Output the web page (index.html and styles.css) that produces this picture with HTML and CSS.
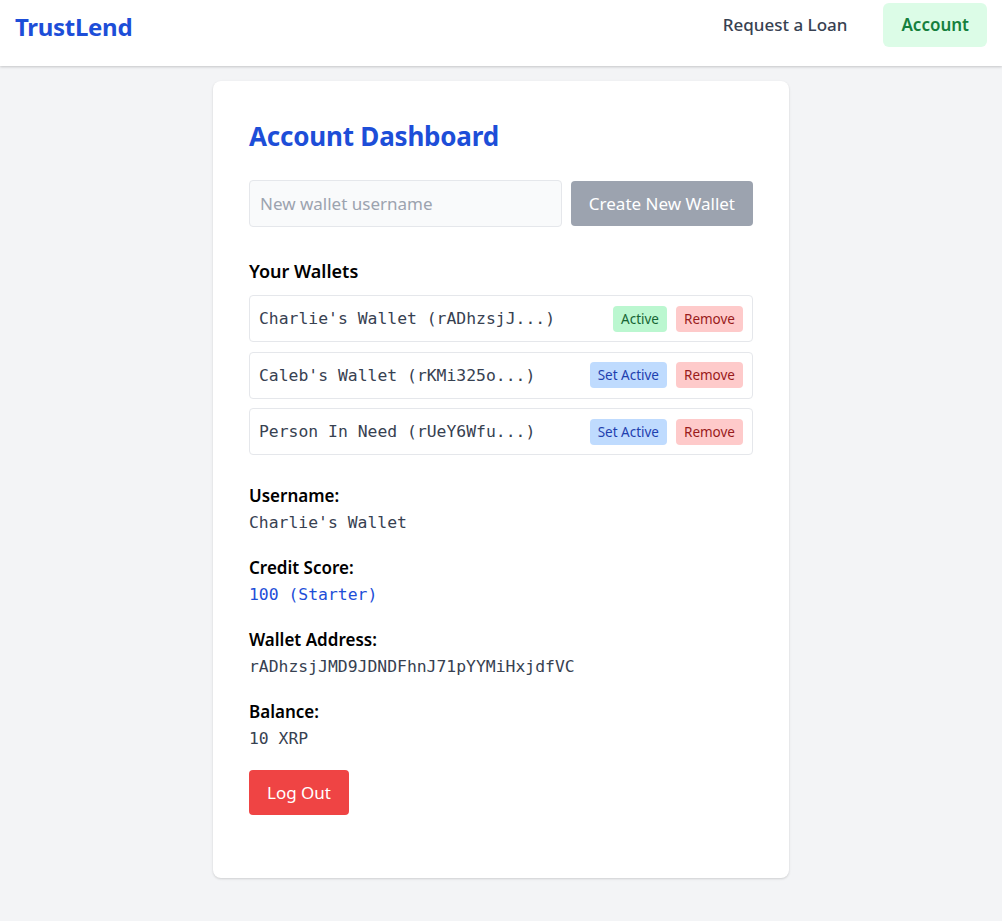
FILE: index.html
```html
<!DOCTYPE html>
<html lang="en">
<head>
<meta charset="utf-8">
<title>TrustLend - Account</title>
<link rel="stylesheet" href="styles.css">
</head>
<body>
<header class="topbar">
  <div class="logo">TrustLend</div>
  <nav class="nav">
    <a class="nav-link">Request a Loan</a>
    <a class="nav-link nav-active">Account</a>
  </nav>
</header>
<main class="page">
  <section class="card">
    <h1 class="title">Account Dashboard</h1>
    <div class="create-row">
      <input class="wallet-input" type="text" placeholder="New wallet username">
      <button class="btn-create">Create New Wallet</button>
    </div>
    <h2 class="subtitle">Your Wallets</h2>
    <ul class="wallet-list">
      <li class="wallet-row">
        <span class="wallet-name">Charlie's Wallet (rADhzsjJ...)</span>
        <div class="wallet-actions">
          <span class="badge badge-active">Active</span>
          <button class="badge badge-remove">Remove</button>
        </div>
      </li>
      <li class="wallet-row">
        <span class="wallet-name">Caleb's Wallet (rKMi325o...)</span>
        <div class="wallet-actions">
          <button class="badge badge-set">Set Active</button>
          <button class="badge badge-remove">Remove</button>
        </div>
      </li>
      <li class="wallet-row">
        <span class="wallet-name">Person In Need (rUeY6Wfu...)</span>
        <div class="wallet-actions">
          <button class="badge badge-set">Set Active</button>
          <button class="badge badge-remove">Remove</button>
        </div>
      </li>
    </ul>
    <dl class="info">
      <div class="info-item">
        <dt>Username:</dt>
        <dd>Charlie's Wallet</dd>
      </div>
      <div class="info-item">
        <dt>Credit Score:</dt>
        <dd class="score">100 (Starter)</dd>
      </div>
      <div class="info-item">
        <dt>Wallet Address:</dt>
        <dd>rADhzsjJMD9JDNDFhnJ71pYYMiHxjdfVC</dd>
      </div>
      <div class="info-item">
        <dt>Balance:</dt>
        <dd>10 XRP</dd>
      </div>
    </dl>
    <button class="btn-logout">Log Out</button>
  </section>
</main>
</body>
</html>
```
FILE: styles.css
```css
* { box-sizing: border-box; }
html, body { margin: 0; padding: 0; }
body {
  background: #f3f4f6;
  font-family: "Noto Sans", "Open Sans", sans-serif;
  color: #000;
  min-height: 921px;
}
.topbar {
  height: 66px;
  background: #fff;
  box-shadow: 0 1px 3px rgba(0,0,0,0.12), 0 1px 2px rgba(0,0,0,0.08);
  display: flex;
  align-items: flex-start;
  justify-content: space-between;
  padding: 0 15px;
}
.logo {
  font-size: 24px;
  font-weight: 700;
  color: #1d4ed8;
  margin-top: 10px;
  letter-spacing: -0.3px;
}
.nav {
  display: flex;
  align-items: center;
  gap: 18px;
  margin-top: 3px;
}
.nav-link {
  font-size: 17px;
  font-weight: 500;
  color: #374151;
  padding: 10px 18px;
  border-radius: 6px;
  line-height: 24px;
}
.nav-active {
  background: #dcfce7;
  color: #15803d;
  font-weight: 600;
}
.page {
  display: flex;
  justify-content: center;
  padding-top: 15px;
  padding-bottom: 43px;
}
.card {
  width: 576px;
  background: #fff;
  border-radius: 8px;
  box-shadow: 0 1px 3px rgba(0,0,0,0.10), 0 1px 2px rgba(0,0,0,0.06);
  padding: 36px 36px 63px;
}
.title {
  margin: 0 0 25px;
  font-size: 26px;
  font-weight: 700;
  color: #1d4ed8;
  line-height: 38px;
  letter-spacing: -0.2px;
}
.create-row {
  display: flex;
  align-items: center;
  gap: 9px;
}
.wallet-input {
  flex: 1;
  height: 47px;
  background: #f9fafb;
  border: 1px solid #e5e7eb;
  border-radius: 4px;
  padding: 0 10px;
  font-family: inherit;
  font-size: 17px;
  color: #111827;
}
.wallet-input::placeholder { color: #9ca3af; }
.btn-create {
  height: 45px;
  padding: 0 18px;
  background: #9ca3af;
  color: #fff;
  border: none;
  border-radius: 4px;
  font-family: inherit;
  font-size: 17px;
}
.subtitle {
  margin: 32px 0 12px;
  font-size: 18px;
  font-weight: 600;
  line-height: 24px;
}
.wallet-list {
  list-style: none;
  margin: 0;
  padding: 0;
  display: flex;
  flex-direction: column;
  gap: 9.5px;
}
.wallet-row {
  height: 47px;
  border: 1px solid #e5e7eb;
  border-radius: 4px;
  display: flex;
  align-items: center;
  justify-content: space-between;
  padding: 0 9px;
}
.wallet-name {
  font-family: "DejaVu Sans Mono", "Liberation Mono", monospace;
  font-size: 16.4px;
  color: #374151;
}
.wallet-actions {
  display: flex;
  gap: 9px;
}
.badge {
  display: inline-flex;
  align-items: center;
  height: 26px;
  padding: 0 8px;
  border: none;
  border-radius: 4px;
  font-family: inherit;
  font-size: 13.5px;
}
.badge-active { background: #bbf7d0; color: #166534; }
.badge-set { background: #bfdbfe; color: #1e40af; }
.badge-remove { background: #fecaca; color: #991b1b; }
.info {
  margin: 27px 0 0;
  display: flex;
  flex-direction: column;
  gap: 18px;
}
.info-item dt {
  font-size: 17px;
  font-weight: 600;
  line-height: 27px;
}
.info-item dd {
  margin: 0;
  font-family: "DejaVu Sans Mono", "Liberation Mono", monospace;
  font-size: 16.4px;
  color: #374151;
  line-height: 27px;
}
.info-item dd.score { color: #1d4ed8; }
.btn-logout {
  margin-top: 18px;
  height: 45px;
  padding: 0 18px;
  background: #ef4444;
  color: #fff;
  border: none;
  border-radius: 4px;
  font-family: inherit;
  font-size: 17px;
}
```
